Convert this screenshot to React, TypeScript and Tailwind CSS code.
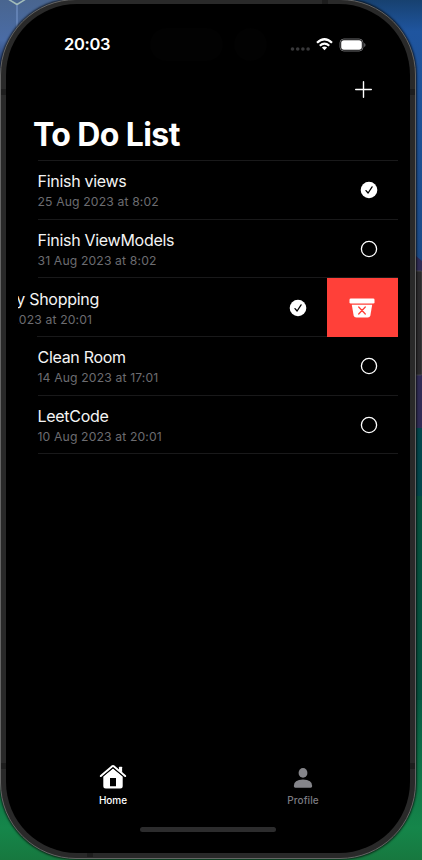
import React from "react";

type Task = { title: string; date: string; done: boolean };

const tasks: Task[] = [
  { title: "Finish views", date: "25 Aug 2023 at 8:02", done: true },
  { title: "Finish ViewModels", date: "31 Aug 2023 at 8:02", done: false },
  { title: "Grocery Shopping", date: "27 Aug 2023 at 20:01", done: true },
  { title: "Clean Room", date: "14 Aug 2023 at 17:01", done: false },
  { title: "LeetCode", date: "10 Aug 2023 at 20:01", done: false },
];

const swipedIndex = 2;

function StatusCircle({ done }: { done: boolean }) {
  return (
    <svg width="18" height="18" viewBox="0 0 18 18" fill="none" className="shrink-0">
      {done ? (
        <>
          <circle cx="9" cy="9" r="8.3" fill="#fff" />
          <path d="M6 9.6 8.1 12 12.1 5.9" stroke="#000" strokeWidth="1.3" strokeLinecap="round" strokeLinejoin="round" />
        </>
      ) : (
        <circle cx="9" cy="9" r="7.6" stroke="#fff" strokeWidth="1.3" />
      )}
    </svg>
  );
}

function RowText({ task }: { task: Task }) {
  return (
    <div className="pt-[3px] whitespace-nowrap">
      <div className="text-[16px] leading-[20px] tracking-[-0.29px] text-[#f4f4f4]">{task.title}</div>
      <div className="pt-px text-[12.2px] leading-[19px] tracking-[0.14px] text-[#6c6c70]">{task.date}</div>
    </div>
  );
}

function TaskRow({ task }: { task: Task }) {
  return (
    <li className="flex h-[58.7px] pl-[19.5px]">
      <div className="flex flex-1 items-center justify-between border-b border-[#19191a] pr-5">
        <RowText task={task} />
        <StatusCircle done={task.done} />
      </div>
    </li>
  );
}

function SwipedRow({ task }: { task: Task }) {
  return (
    <li className="flex h-[58.7px] justify-end overflow-hidden bg-[linear-gradient(#19191a,#19191a)] bg-[length:calc(100%-19px)_1px] bg-right-bottom bg-no-repeat">
      <div className="flex w-[360.5px] shrink-0 items-center justify-between pr-5">
        <RowText task={task} />
        <StatusCircle done={task.done} />
      </div>
      <button className="flex w-[71.5px] shrink-0 items-center justify-center bg-[#ff4039]">
        <svg width="26" height="20" viewBox="0 0 26 20" fill="none">
          <rect x="0.5" y="0.5" width="25" height="5" rx="1.3" fill="#fff" />
          <path d="M2.8 6.7H23.2L21.4 17.2Q21 19.5 18.7 19.5H7.3Q5 19.5 4.6 17.2Z" fill="#fff" />
          <path d="M9.7 9 16.3 16M16.3 9 9.7 16" stroke="#ff4039" strokeWidth="1.3" strokeLinecap="round" />
        </svg>
      </button>
    </li>
  );
}

function StatusBar() {
  return (
    <div className="flex h-[33px] items-center text-white">
      <span className="ml-[46px] w-[86px] text-[16.5px] font-semibold tracking-[-0.3px]">20:03</span>
      <span className="h-[33px] w-[73px] rounded-full bg-[#020202]" />
      <span className="ml-[11px] h-[33px] w-[33px] rounded-full bg-[#020202]" />
      <svg width="20" height="4" viewBox="0 0 20 4" className="mt-[8px] ml-[22.5px]" fill="#39393b">
        <circle cx="2.5" cy="2" r="1.8" />
        <circle cx="7.7" cy="2" r="1.8" />
        <circle cx="12.9" cy="2" r="1.8" />
        <circle cx="18.1" cy="2" r="1.8" />
      </svg>
      <svg width="17" height="13" viewBox="0 0 17 13" className="ml-[6.5px]" fill="none" stroke="#fff" strokeWidth="2.2">
        <path d="M1 4.8Q8.5-2.3 16 4.8" />
        <path d="M3.8 7.8Q8.5 3.5 13.2 7.8" />
        <path d="M5.9 9.6Q8.5 7.6 11.1 9.6L8.5 12.3Z" fill="#fff" stroke="none" />
      </svg>
      <svg width="27" height="14" viewBox="0 0 27 14" className="ml-[6px]" fill="none">
        <rect x="1" y="1" width="23" height="12" rx="3.8" stroke="#69696b" />
        <rect x="2.2" y="2.3" width="20.6" height="9.4" rx="2.6" fill="#fff" />
        <path d="M25.2 5Q26.5 5.5 26.5 7T25.2 9Z" fill="#69696b" />
      </svg>
    </div>
  );
}

function TabBar() {
  return (
    <nav className="flex text-[10px] leading-[12px] font-medium">
      <div className="flex w-[190px] flex-col items-center text-white">
        <svg width="28" height="26" viewBox="0 0 28 26" fill="none">
          <path d="M20 5V3.2Q20 2.7 20.5 2.7H22.6Q23.1 2.7 23.1 3.2V8.5L20 6Z" fill="#fff" />
          <path d="M1.8 12 13 2.4Q14 1.6 15 2.4L26.2 12" stroke="#fff" strokeWidth="2" strokeLinecap="round" strokeLinejoin="round" />
          <path d="M4.3 12.4 14 4.5 23.7 12.4V22Q23.7 24.5 21.2 24.5H6.8Q4.3 24.5 4.3 22ZM11 14V22.3H17V14Z" fill="#fff" fillRule="evenodd" />
          <path d="M3.6 12.5 14 3.9 24.4 12.5" stroke="#000" strokeWidth="0.8" />
        </svg>
        <span className="mt-[4px]">Home</span>
      </div>
      <div className="flex w-[190px] flex-col items-center text-[#7b7b80]">
        <svg width="20" height="26" viewBox="0 0 20 26" fill="#85858a">
          <ellipse cx="10" cy="8.9" rx="4.4" ry="4.9" />
          <path d="M0.8 22Q0.8 15.5 10 15.5T19.2 22Q19.2 23.8 17.6 23.8H2.4Q0.8 23.8 0.8 22Z" />
        </svg>
        <span className="mt-[4px] tracking-[0.1px]">Profile</span>
      </div>
    </nav>
  );
}

function Wallpaper() {
  return (
    <svg className="absolute inset-0" width="422" height="860" viewBox="0 0 422 860">
      <defs>
        <linearGradient id="topLeft" x1="0" y1="0" x2="0" y2="1">
          <stop offset="0" stopColor="#49658f" />
          <stop offset="0.4" stopColor="#4a6ca6" />
          <stop offset="0.65" stopColor="#2a4276" />
          <stop offset="1" stopColor="#152440" />
        </linearGradient>
        <linearGradient id="topRight" x1="0" y1="0" x2="0" y2="1">
          <stop offset="0" stopColor="#174170" />
          <stop offset="0.12" stopColor="#1f559f" />
          <stop offset="1" stopColor="#1b4a86" />
        </linearGradient>
        <linearGradient id="green" x1="0" y1="0" x2="0" y2="1">
          <stop offset="0" stopColor="#075a43" />
          <stop offset="0.8" stopColor="#15864a" />
          <stop offset="1" stopColor="#17783f" />
        </linearGradient>
      </defs>
      <rect width="210" height="100" fill="url(#topLeft)" />
      <path d="M0-6 17 4.5 34-6" stroke="#a2bcba" strokeWidth="1.5" fill="none" />
      <path d="M17 5V30" stroke="#6b8abd" strokeWidth="1.5" />
      <rect x="210" width="212" height="262" fill="url(#topRight)" />
      <path d="M416 256 422 261V430H416Z" fill="#302c55" />
      <rect x="416" y="428" width="6" height="68" fill="#03464c" />
      <rect x="416" y="496" width="6" height="204" fill="#05513e" />
      <rect y="700" width="422" height="160" fill="url(#green)" />
      <rect x="415" y="271" width="7" height="104" rx="1" fill="#2c2b2d" stroke="#555457" strokeWidth="0.7" />
    </svg>
  );
}

function FrameDetails() {
  return (
    <svg className="pointer-events-none absolute inset-0" width="422" height="860" viewBox="0 0 422 860" fill="#1d1d1d">
      <rect x="1" y="89" width="5" height="6" />
      <rect x="410" y="89" width="5" height="6" />
      <rect x="1" y="763" width="5" height="6" />
      <rect x="410" y="763" width="5" height="6" />
      <rect x="322" y="0" width="6" height="4" />
      <rect x="87" y="853" width="6" height="4" />
    </svg>
  );
}

export default function App() {
  return (
    <main className="relative h-[860px] w-[422px] overflow-hidden bg-black font-['Inter','Liberation_Sans',sans-serif]">
      <Wallpaper />
      <div className="relative -mt-px h-[860px] w-[416px] rounded-[76px] border border-[#656565] bg-[#292929] px-[5px] pt-[4px] pb-[5px] shadow-[0_0_2px_1px_rgba(0,0,0,0.65)]">
        <div className="flex h-full flex-col overflow-hidden rounded-[71px] bg-black px-3 pt-6">
          <StatusBar />
          <div className="mt-[20px] flex justify-end pr-[26px]">
            <svg width="17" height="17" viewBox="0 0 17 17" fill="none" stroke="#fff" strokeWidth="1.4" strokeLinecap="round">
              <path d="M8.5.7V16.3M.7 8.5H16.3" />
            </svg>
          </div>
          <h1 className="mt-[17px] ml-[15px] text-[32px] leading-[40px] font-bold tracking-[-0.6px] text-white">To Do List</h1>
          <ul className="mt-[5px]">
            <li className="ml-[19.5px] h-px bg-[#19191a]" />
            {tasks.map((task, i) =>
              i === swipedIndex ? <SwipedRow key={task.title} task={task} /> : <TaskRow key={task.title} task={task} />
            )}
          </ul>
          <div className="mt-auto">
            <TabBar />
            <div className="mx-auto mt-[21px] mb-[21px] h-[5px] w-[136px] rounded-full bg-[#2c2c2d]" />
          </div>
        </div>
      </div>
      <FrameDetails />
    </main>
  );
}
